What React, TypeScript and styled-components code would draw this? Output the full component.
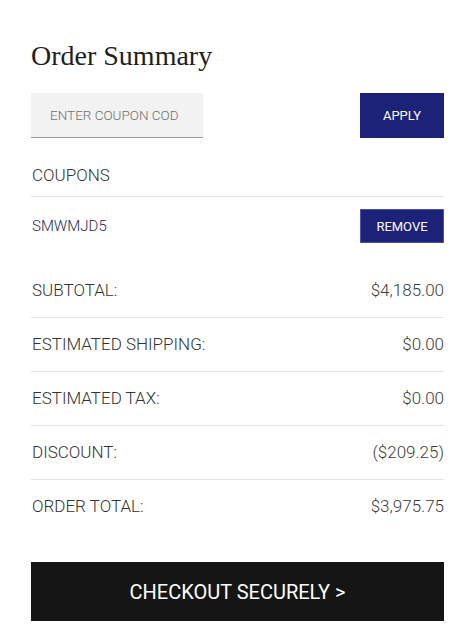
import React, { FC } from 'react'
import styled, { createGlobalStyle } from 'styled-components'

const GlobalStyle = createGlobalStyle`
	html, body {
		margin: 0;
		padding: 0;
		background: #fff;
	}
	body {
		font-family: Roboto, 'Liberation Sans', sans-serif;
		-webkit-font-smoothing: antialiased;
	}
`

const Panel = styled.div`
	width: 413px;
	padding: 39px 16px 16px 31px;
	display: flex;
	flex-direction: column;
`

const Title = styled.h1`
	margin: 0;
	font-family: 'Liberation Serif', 'DejaVu Serif', serif;
	font-weight: 400;
	font-size: 28px;
	line-height: 34px;
	color: #1e1e1e;
`

const CouponForm = styled.div`
	margin-top: 20px;
	display: flex;
	justify-content: space-between;
	align-items: flex-start;
`

const CouponInput = styled.input`
	box-sizing: border-box;
	width: 172px;
	height: 45px;
	padding: 0 25px 0 19px;
	border: 0;
	border-bottom: 1px solid #9a9a9a;
	background: #f2f2f2;
	font-family: Roboto, 'Liberation Sans', sans-serif;
	font-weight: 300;
	font-size: 13.5px;
	color: #333;
	outline: none;
	&::placeholder {
		color: #6f6f6f;
		opacity: 1;
	}
`

const NavyButton = styled.button<{ tall?: boolean }>`
	box-sizing: border-box;
	width: 84px;
	height: ${(props) => (props.tall ? '45px' : '34px')};
	padding: 0;
	background: #1b2278;
	border: 1px solid ${(props) => (props.tall ? '#1b2278' : '#4a54b0')};
	color: #fff;
	font-family: Roboto, 'Liberation Sans', sans-serif;
	font-weight: 400;
	font-size: 13px;
	cursor: pointer;
`

const CouponsHeader = styled.div`
	padding: 26px 0 10px 1px;
	line-height: 22px;
	font-size: 17px;
	font-weight: 300;
	color: #333;
	border-bottom: 1px solid #e3e3e3;
`

const CouponRow = styled.div`
	margin-top: 12px;
	display: flex;
	justify-content: space-between;
	align-items: center;
`

const CouponCode = styled.span`
	padding-left: 1px;
	font-size: 15px;
	font-weight: 300;
	color: #262a5e;
`

const Totals = styled.div`
	margin-top: 21px;
	display: flex;
	flex-direction: column;
`

const TotalRow = styled.div`
	display: flex;
	justify-content: space-between;
	align-items: center;
	padding: 16px 0;
	line-height: 21px;
	font-size: 17px;
	font-weight: 300;
	color: #333;
	border-bottom: 1px solid #e3e3e3;
	&:last-child {
		border-bottom: 0;
	}
`

const Label = styled.span`
	padding-left: 1px;
`

const Amount = styled.span`
	color: #3c3c3c;
`

const CheckoutButton = styled.button`
	margin-top: 29px;
	width: 100%;
	height: 59px;
	background: #151515;
	border: 0;
	color: #fff;
	font-family: Roboto, 'Liberation Sans', sans-serif;
	font-weight: 400;
	font-size: 20px;
	cursor: pointer;
`

const totals: [string, string][] = [
	['SUBTOTAL:', '$4,185.00'],
	['ESTIMATED SHIPPING:', '$0.00'],
	['ESTIMATED TAX:', '$0.00'],
	['DISCOUNT:', '($209.25)'],
	['ORDER TOTAL:', '$3,975.75'],
]

const App: FC = () => {
	return (
		<>
			<GlobalStyle />
			<Panel>
				<Title>Order Summary</Title>
				<CouponForm>
					<CouponInput placeholder="ENTER COUPON CODE" />
					<NavyButton tall>APPLY</NavyButton>
				</CouponForm>
				<CouponsHeader>COUPONS</CouponsHeader>
				<CouponRow>
					<CouponCode>SMWMJD5</CouponCode>
					<NavyButton>REMOVE</NavyButton>
				</CouponRow>
				<Totals>
					{totals.map(([label, value]) => (
						<TotalRow key={label}>
							<Label>{label}</Label>
							<Amount>{value}</Amount>
						</TotalRow>
					))}
				</Totals>
				<CheckoutButton>CHECKOUT SECURELY &gt;</CheckoutButton>
			</Panel>
		</>
	)
}

export default App
